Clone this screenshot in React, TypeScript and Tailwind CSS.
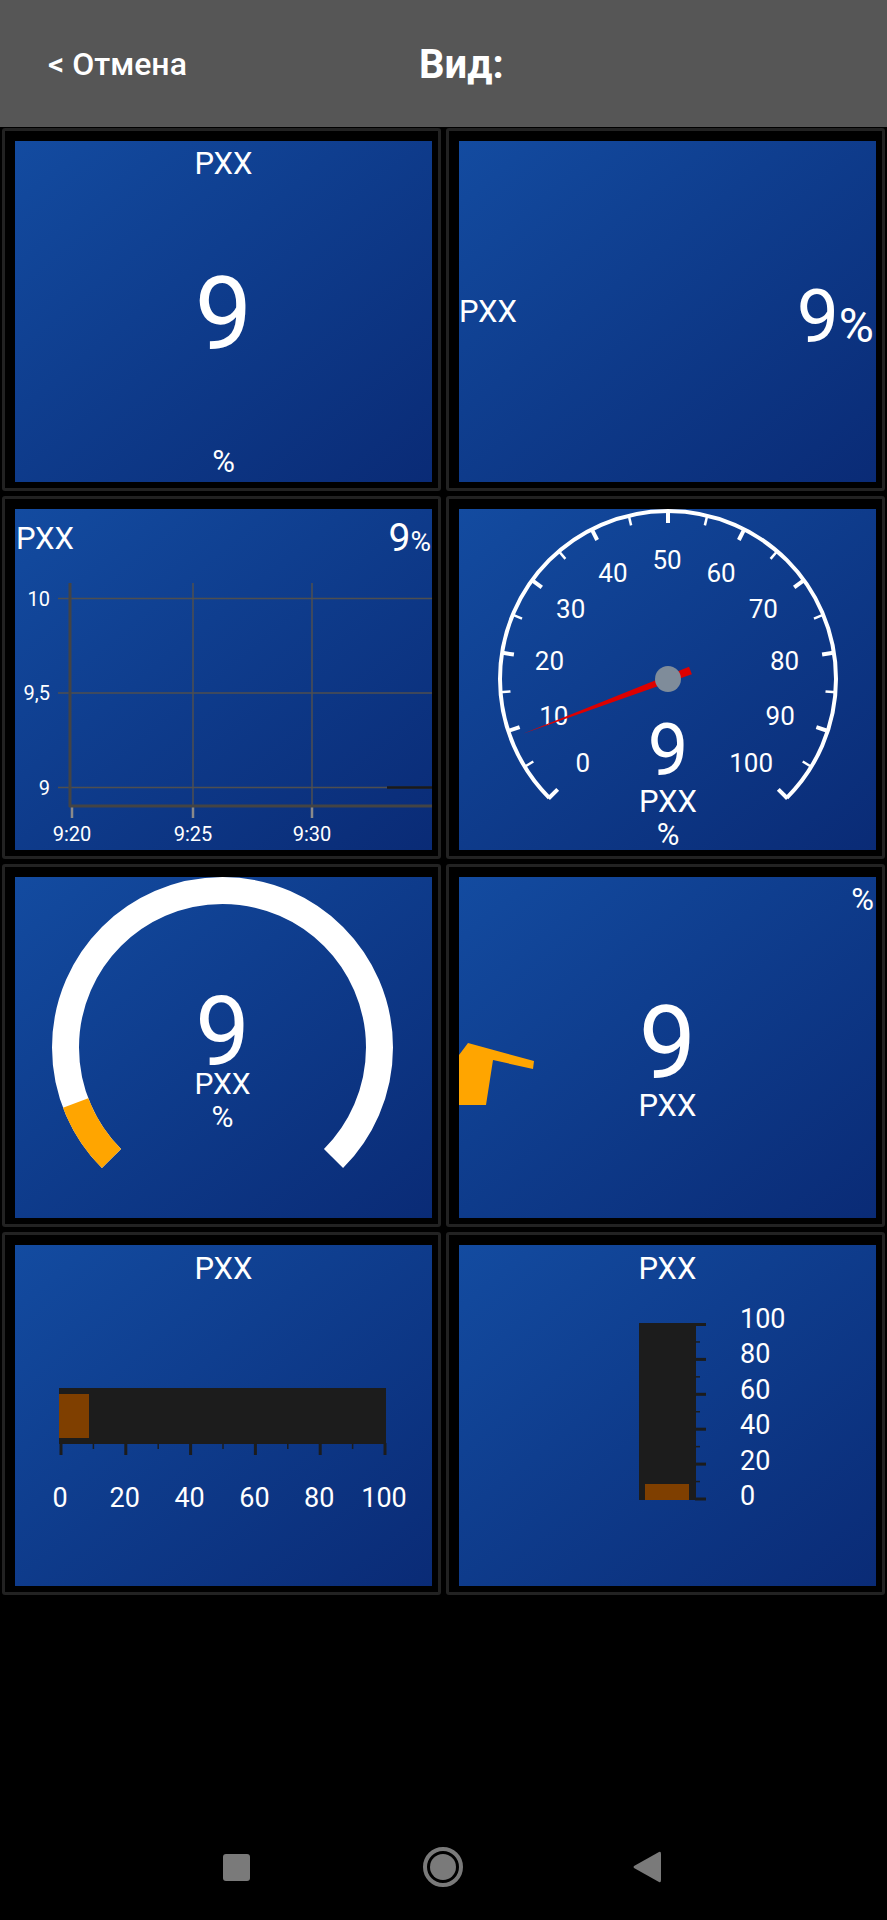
import React from 'react';

const TITLE = 'РХХ';

// point on a circle, angle in degrees measured clockwise from 12 o'clock
const pt = (cx: number, cy: number, r: number, deg: number) => {
  const a = (deg * Math.PI) / 180;
  return [cx + r * Math.sin(a), cy - r * Math.cos(a)];
};

const arc = (cx: number, cy: number, r: number, a0: number, a1: number) => {
  const [x0, y0] = pt(cx, cy, r, a0);
  const [x1, y1] = pt(cx, cy, r, a1);
  const large = a1 - a0 > 180 ? 1 : 0;
  return `M${x0} ${y0} A${r} ${r} 0 ${large} 1 ${x1} ${y1}`;
};

function Tile({ children }: { children: React.ReactNode }) {
  return (
    <div className="h-[363px] rounded-[3px] bg-[#222222] p-[3px]">
      <div className="h-full bg-black pt-[10px] pl-[10px] pr-[6px] pb-[6px]">
        <div className="relative h-[341px] w-[417px] overflow-hidden bg-linear-to-br from-[#134ba0] to-[#0a2b76] text-white">
          {children}
        </div>
      </div>
    </div>
  );
}

function BigValue() {
  return (
    <div className="flex h-full flex-col items-center">
      <div className="mt-[7px] text-[31px] leading-none">{TITLE}</div>
      <div className="mt-[84px] text-[102px] leading-none">9</div>
      <div className="mt-auto mb-[5px] text-[31px] leading-none">%</div>
    </div>
  );
}

function InlineValue() {
  return (
    <div className="flex h-full items-center justify-between pr-[2px]">
      <div className="text-[31px] leading-none">{TITLE}</div>
      <div className="mt-[9px] flex items-baseline">
        <span className="text-[75px] leading-none">9</span>
        <span className="text-[48px] leading-none">%</span>
      </div>
    </div>
  );
}

function Chart() {
  const rows = [
    { y: 89.5, label: '10' },
    { y: 184, label: '9,5' },
    { y: 278.5, label: '9' },
  ];
  const cols = [
    { x: 57, label: '9:20' },
    { x: 178, label: '9:25' },
    { x: 297, label: '9:30' },
  ];
  return (
    <>
      <svg className="absolute inset-0" width="417" height="341" viewBox="0 0 417 341">
        {rows.map((r) => (
          <g key={r.label}>
            <line x1="43" y1={r.y} x2="417" y2={r.y} stroke="#4f4f4f" strokeWidth="1.5" />
            <text x="35" y={r.y + 7} textAnchor="end" fontSize="20" fill="#fff">
              {r.label}
            </text>
          </g>
        ))}
        {cols.slice(1).map((c) => (
          <line key={c.label} x1={c.x} y1="74" x2={c.x} y2="297" stroke="#4f4f4f" strokeWidth="1.5" />
        ))}
        {cols.map((c) => (
          <g key={c.label + 't'}>
            <line x1={c.x} y1="298" x2={c.x} y2="309" stroke="#8a8a8a" strokeWidth="2.5" />
            <text x={c.x} y="332" textAnchor="middle" fontSize="20" fill="#fff">
              {c.label}
            </text>
          </g>
        ))}
        <line x1="55" y1="74" x2="55" y2="298" stroke="#444" strokeWidth="3" />
        <line x1="54" y1="297" x2="417" y2="297" stroke="#444" strokeWidth="3" />
        <line x1="372" y1="278.5" x2="417" y2="278.5" stroke="#1a1a1a" strokeWidth="2.5" />
      </svg>
      <div className="relative flex items-center justify-between pl-px pr-px pt-[10px]">
        <div className="text-[31px] leading-none">{TITLE}</div>
        <div className="flex items-baseline">
          <span className="text-[39px] leading-none">9</span>
          <span className="text-[28px] leading-none">%</span>
        </div>
      </div>
    </>
  );
}

function Speedometer() {
  const cx = 209;
  const cy = 170;
  const r = 168;
  const ticks = Array.from({ length: 21 }, (_, i) => i);
  const labels = [0, 10, 20, 30, 40, 50, 60, 70, 80, 90, 100];
  const na = -135 + 2.7 * 9;
  const [tx, ty] = pt(cx, cy, 155, na);
  const [bx, by] = pt(cx, cy, -24, na);
  const [px, py] = pt(0, 0, 4, na + 90);
  return (
    <svg className="absolute inset-0" width="417" height="341" viewBox="0 0 417 341">
      <path d={arc(cx, cy, r, -135, 135)} fill="none" stroke="#fff" strokeWidth="4" />
      {ticks.map((i) => {
        const a = -135 + i * 13.5;
        const major = i % 2 === 0;
        const [x0, y0] = pt(cx, cy, r + 1, a);
        const [x1, y1] = pt(cx, cy, r - (major ? 12 : 10), a);
        return <line key={i} x1={x0} y1={y0} x2={x1} y2={y1} stroke="#fff" strokeWidth={major ? 4 : 2.5} />;
      })}
      {labels.map((v) => {
        const [x, y] = pt(cx, cy, 119, -135 + 2.7 * v);
        return (
          <text key={v} x={x - 1} y={y + 9.2} textAnchor="middle" fontSize="26" fill="#fff">
            {v}
          </text>
        );
      })}
      <text x={cx} y="265.6" textAnchor="middle" fontSize="72" fill="#fff">
        9
      </text>
      <text x={cx} y="303" textAnchor="middle" fontSize="31" fill="#fff">
        {TITLE}
      </text>
      <text x={cx} y="336" textAnchor="middle" fontSize="31" fill="#fff">
        %
      </text>
      <polygon points={`${tx},${ty} ${bx + px},${by + py} ${bx - px},${by - py}`} fill="#dd0000" />
      <circle cx={cx} cy={cy} r="13" fill="#7f8c9a" />
    </svg>
  );
}

function RingGauge() {
  const cx = 207.5;
  const cy = 170.5;
  return (
    <svg className="absolute inset-0" width="417" height="341" viewBox="0 0 417 341">
      <path d={arc(cx, cy, 157, -135, 135)} fill="none" stroke="#fff" strokeWidth="27" />
      <path d={arc(cx, cy, 157, -135, -135 + 2.7 * 9)} fill="none" stroke="#ffa500" strokeWidth="27" />
      <text x={cx} y="188" textAnchor="middle" fontSize="97" fill="#fff">
        9
      </text>
      <text x={cx} y="216.5" textAnchor="middle" fontSize="30" fill="#fff">
        {TITLE}
      </text>
      <text x={cx} y="250" textAnchor="middle" fontSize="30" fill="#fff">
        %
      </text>
    </svg>
  );
}

function ClippedGauge() {
  return (
    <>
      <svg className="absolute inset-0" width="417" height="341" viewBox="0 0 417 341">
        <path d="M0 228 L0 178 L9 166 L75 184 L74 192 L34 183 L27 228 Z" fill="#ffa500" />
      </svg>
      <div className="relative flex h-full flex-col items-center">
        <div className="self-end pr-[2px] pt-[7px] text-[31px] leading-none">%</div>
        <div className="mt-[77px] text-[102px] leading-none">9</div>
        <div className="-mt-[4px] text-[31px] leading-none">{TITLE}</div>
      </div>
    </>
  );
}

function HBar() {
  const step = 64.8;
  const majors = [0, 1, 2, 3, 4, 5];
  return (
    <>
      <div className="flex justify-center pt-[8px] text-[31px] leading-none">{TITLE}</div>
      <svg className="absolute inset-0" width="417" height="341" viewBox="0 0 417 341">
        <rect x="44" y="143" width="327" height="56" fill="#1c1c1c" />
        <rect x="44" y="149" width="30" height="44" fill="#7f3f00" />
        {majors.map((i) => {
          const x = 46 + i * step;
          return (
            <g key={i}>
              <line x1={x} y1="198" x2={x} y2="210" stroke="#1c1c1c" strokeWidth="3" />
              {i < 5 && <line x1={x + step / 2} y1="198" x2={x + step / 2} y2="204" stroke="#1c1c1c" strokeWidth="1.5" />}
              <text x={x - 1} y="261.6" textAnchor="middle" fontSize="27" fill="#fff">
                {i * 20}
              </text>
            </g>
          );
        })}
      </svg>
    </>
  );
}

function VBar() {
  const step = 34.9;
  const majors = [0, 1, 2, 3, 4, 5];
  return (
    <>
      <div className="flex justify-center pt-[8px] text-[31px] leading-none">{TITLE}</div>
      <svg className="absolute inset-0" width="417" height="341" viewBox="0 0 417 341">
        <rect x="180" y="78" width="57" height="177" fill="#1c1c1c" />
        <rect x="186" y="239" width="44" height="16" fill="#7f3f00" />
        {majors.map((i) => {
          const y = 79.5 + i * step;
          return (
            <g key={i}>
              <line x1="236" y1={y} x2="247" y2={y} stroke="#1c1c1c" strokeWidth="3" />
              {i < 5 && <line x1="236" y1={y + step / 2} x2="241" y2={y + step / 2} stroke="#1c1c1c" strokeWidth="1.5" />}
              <text x="281" y={73 + i * 35.5 + 9.6} fontSize="27" fill="#fff">
                {100 - i * 20}
              </text>
            </g>
          );
        })}
      </svg>
    </>
  );
}

export default function App() {
  return (
    <div className="flex h-[1920px] w-[887px] flex-col bg-black font-['Roboto',sans-serif]">
      <header className="flex h-[127px] items-center bg-[#565656] text-white">
        <div className="w-[419px] pl-[48px] text-[32px] font-medium leading-none">&lt; Отмена</div>
        <div className="mt-[2px] text-[40px] font-bold leading-none">Вид:</div>
      </header>

      <div className="grid grid-cols-[439px_439px] gap-[5px] px-[2px] pt-px">
        <Tile>
          <BigValue />
        </Tile>
        <Tile>
          <InlineValue />
        </Tile>
        <Tile>
          <Chart />
        </Tile>
        <Tile>
          <Speedometer />
        </Tile>
        <Tile>
          <RingGauge />
        </Tile>
        <Tile>
          <ClippedGauge />
        </Tile>
        <Tile>
          <HBar />
        </Tile>
        <Tile>
          <VBar />
        </Tile>
      </div>

      <nav className="mt-auto flex h-[106px] items-center pl-[223px]">
        <div className="h-[27px] w-[27px] rounded-[3px] bg-[#7a7a7a]" />
        <div className="ml-[173px] flex h-[40px] w-[40px] items-center justify-center rounded-full border-[4px] border-[#7a7a7a]">
          <div className="h-[26px] w-[26px] rounded-full bg-[#7a7a7a]" />
        </div>
        <svg className="ml-[170px]" width="28" height="32" viewBox="0 0 28 32">
          <path d="M26 1 Q28 0 28 3 L28 29 Q28 32 26 31 L1 17 Q0 16 1 15 Z" fill="#7a7a7a" />
        </svg>
      </nav>
    </div>
  );
}
